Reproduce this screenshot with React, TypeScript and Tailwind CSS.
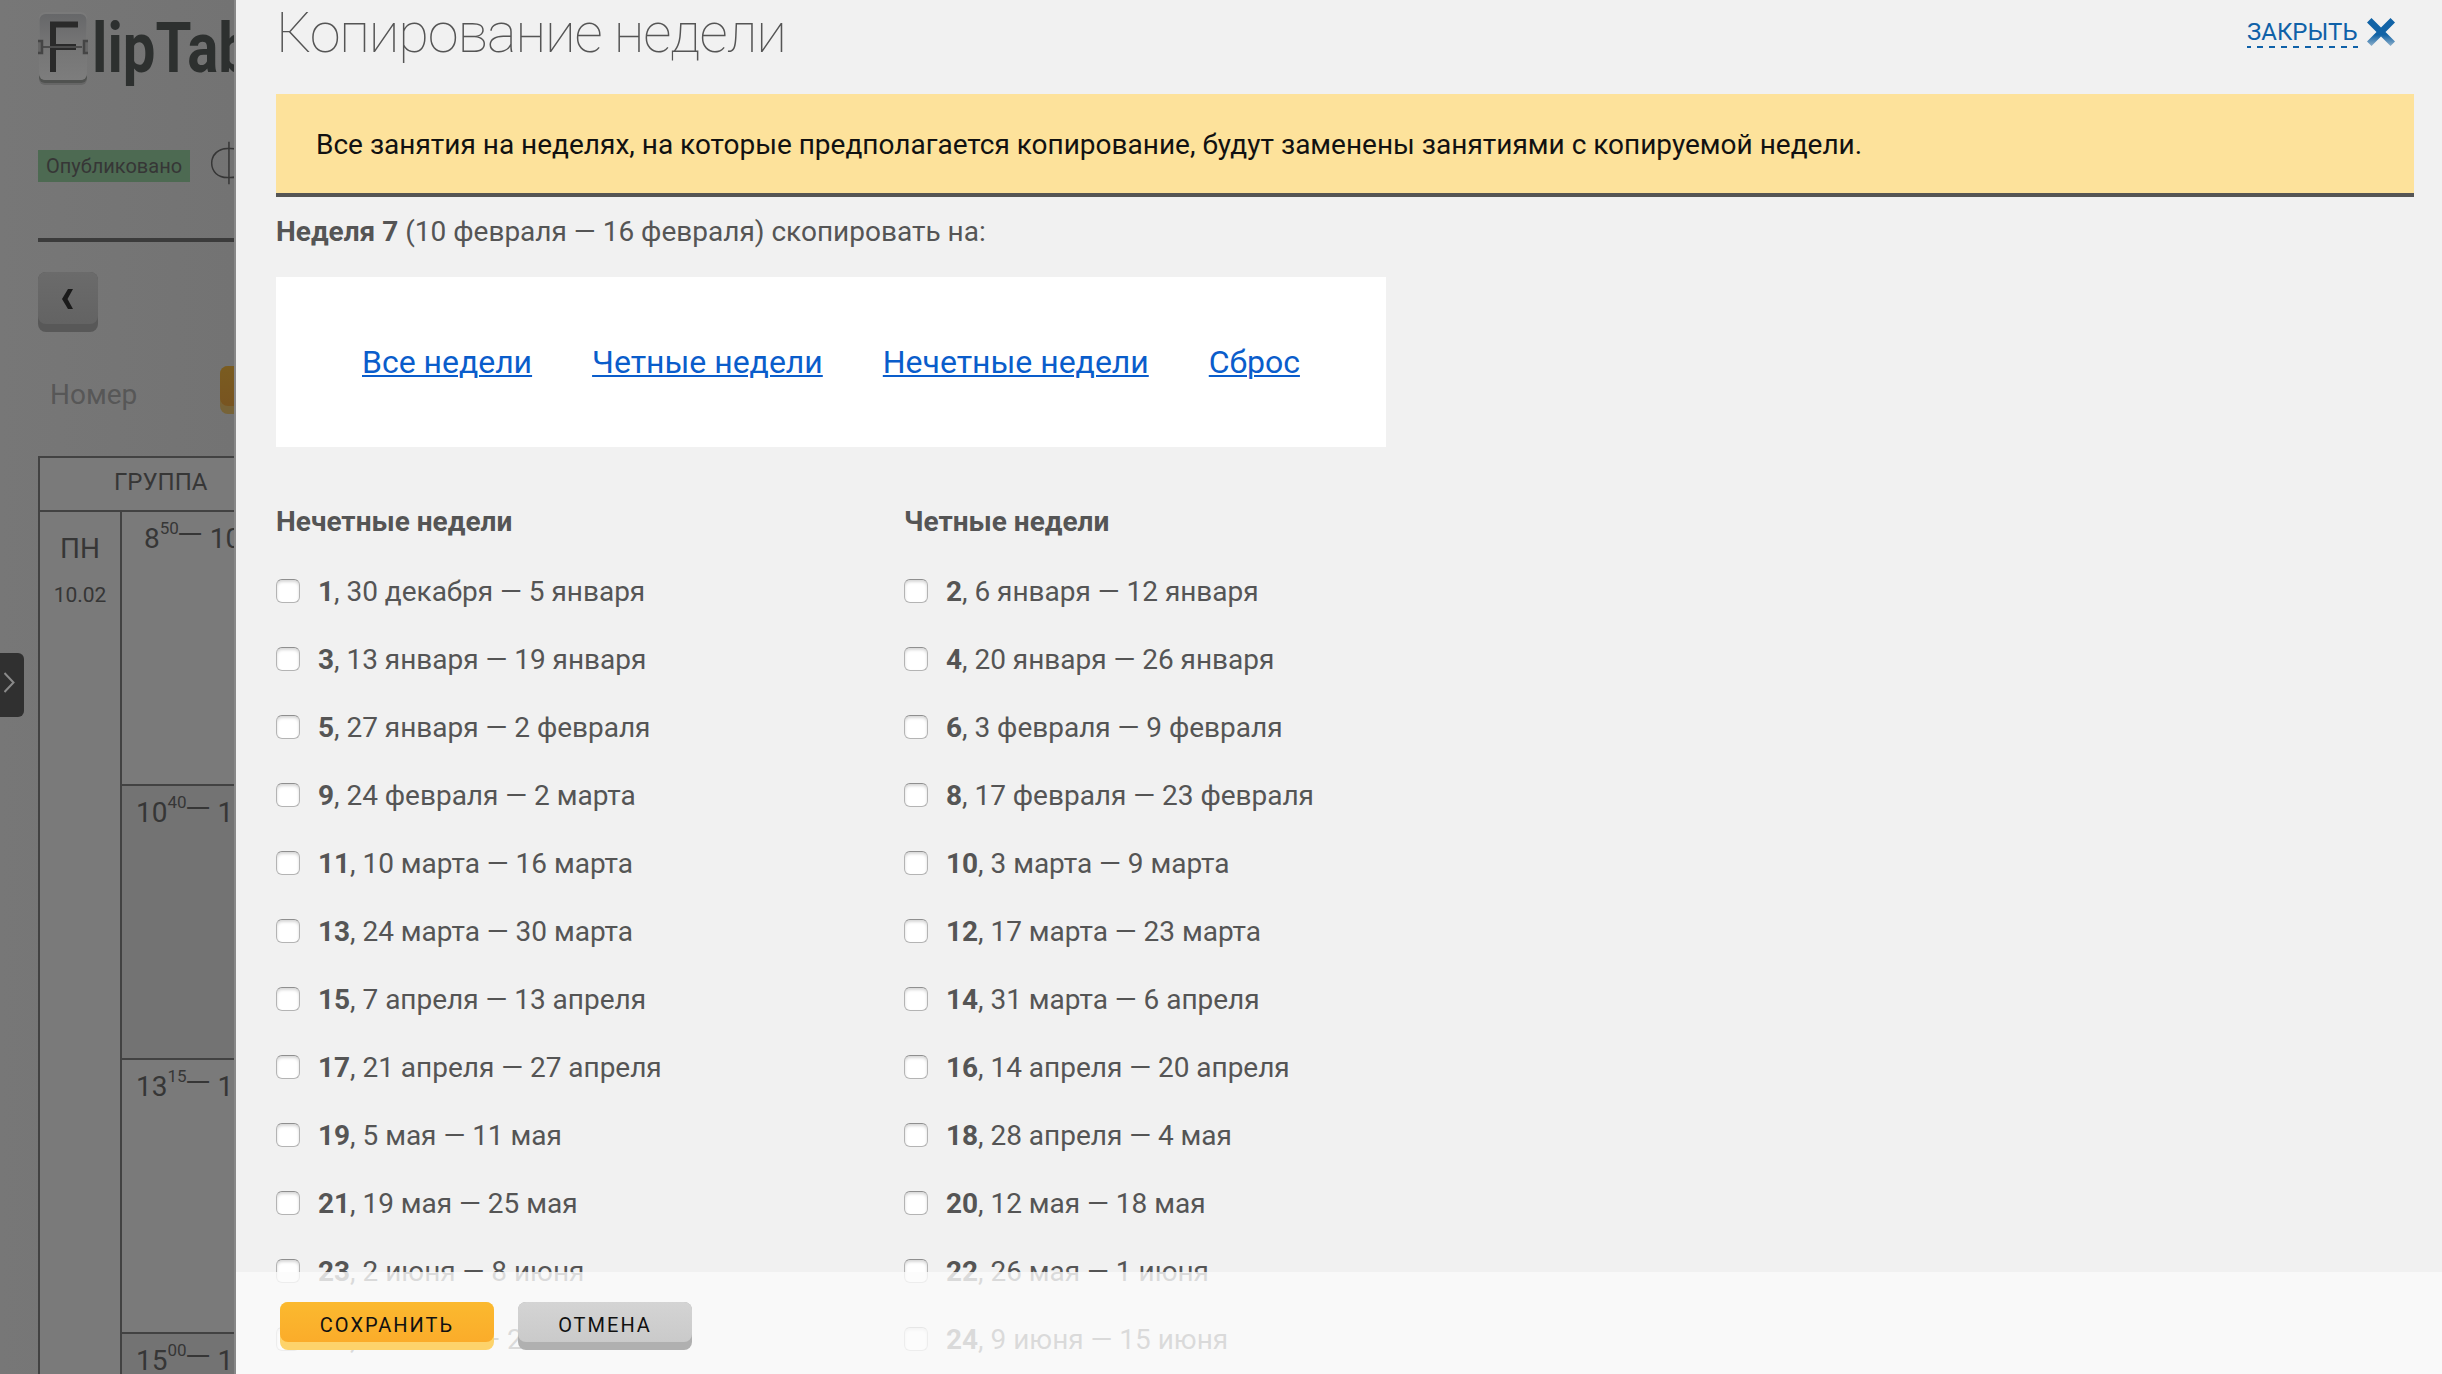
import React from 'react';

const ODD_WEEKS: [number, string][] = [
  [1, '30 декабря — 5 января'],
  [3, '13 января — 19 января'],
  [5, '27 января — 2 февраля'],
  [9, '24 февраля — 2 марта'],
  [11, '10 марта — 16 марта'],
  [13, '24 марта — 30 марта'],
  [15, '7 апреля — 13 апреля'],
  [17, '21 апреля — 27 апреля'],
  [19, '5 мая — 11 мая'],
  [21, '19 мая — 25 мая'],
  [23, '2 июня — 8 июня'],
  [25, '16 июня — 22 июня'],
];

const EVEN_WEEKS: [number, string][] = [
  [2, '6 января — 12 января'],
  [4, '20 января — 26 января'],
  [6, '3 февраля — 9 февраля'],
  [8, '17 февраля — 23 февраля'],
  [10, '3 марта — 9 марта'],
  [12, '17 марта — 23 марта'],
  [14, '31 марта — 6 апреля'],
  [16, '14 апреля — 20 апреля'],
  [18, '28 апреля — 4 мая'],
  [20, '12 мая — 18 мая'],
  [22, '26 мая — 1 июня'],
  [24, '9 июня — 15 июня'],
];

const LINKS = ['Все недели', 'Четные недели', 'Нечетные недели', 'Сброс'];

function WeekColumn({ title, weeks }: { title: string; weeks: [number, string][] }) {
  return (
    <section className="w-[628px]">
      <h2 className="mb-[2px] h-[68px] pt-px text-[28px] leading-[68px] font-bold">{title}</h2>
      {weeks.map(([n, range]) => (
        <label key={n} className="flex h-[68px] items-center text-[28px] tracking-[-0.02px] whitespace-nowrap">
          <input
            type="checkbox"
            className="mr-[18px] size-6 shrink-0 appearance-none rounded-[6px] border border-[#b4b4b4] border-t-[#8f8f8f] bg-white shadow-[inset_0_2px_3px_rgba(0,0,0,0.16)]"
          />
          <span className="pt-[2px] leading-[40px]">
            <b>{n}</b>, {range}
          </span>
        </label>
      ))}
    </section>
  );
}

function TimeCell({ hour, minutes, end, className }: { hour: string; minutes: string; end: string; className: string }) {
  return (
    <div className={`relative overflow-hidden border-b-2 border-[#424242] whitespace-nowrap ${className}`}>
      <div className="flex text-[28px] leading-[54px]">
        <span>{hour}</span>
        <span className="-mt-[11px] text-[17px]">{minutes}</span>
        <span className="-mt-1 w-[22px] origin-center scale-x-[1.2]">—</span>
        <span className="ml-[9px]">{end}</span>
      </div>
    </div>
  );
}

function Logo() {
  return (
    <div className="flex h-[96px] w-[240px]">
      <svg width="50" height="96" viewBox="0 0 50 96" className="shrink-0">
        <defs>
          <linearGradient id="tile" x1="0" y1="0" x2="0" y2="1">
            <stop offset="0" stopColor="#666769" />
            <stop offset="0.48" stopColor="#767676" />
            <stop offset="0.5" stopColor="#757575" />
            <stop offset="1" stopColor="#7d7d7d" />
          </linearGradient>
        </defs>
        <rect x="1" y="17" width="48" height="68" rx="6" fill="#666" />
        <rect x="1" y="15" width="48" height="68" rx="6" fill="#505250" />
        <rect x="1" y="12" width="48" height="68" rx="6" fill="#7a7a7a" />
        <rect x="1.5" y="14" width="47" height="66" rx="6" fill="url(#tile)" />
        <path d="M15 72V24.5H40M15 47H38" fill="none" stroke="#2a2a2a" strokeWidth="6" />
        <path d="M5 47H44" stroke="#4c4c4c" strokeWidth="2" />
        <path d="M0 41H4V53H0M50 41H46V53H50" fill="#666" stroke="#454545" strokeWidth="2.5" />
      </svg>
      <span className="ml-[4px] origin-left scale-x-[0.83] text-[70px] leading-[96px] font-bold text-[#2d302f]">lipTab</span>
    </div>
  );
}

export default function App() {
  return (
    <div className="relative flex h-[1374px] w-full overflow-hidden bg-[#f1f1f1] font-['Roboto',sans-serif] text-[#555]">
      <aside className="relative h-full w-[234px] shrink-0 overflow-hidden bg-gradient-to-r from-[#777] to-[#737373] pl-[38px] text-[#363636]">
        <Logo />
        <div className="mt-[54px] flex h-8 w-[260px] items-center">
          <span className="flex h-8 w-[152px] shrink-0 items-center justify-center bg-[#4d6a52] pb-px text-[20px]">Опубликовано</span>
          <span className="ml-[19px] text-[56px] leading-8 font-thin -translate-y-[2px]">Ф</span>
        </div>
        <div className="mt-[56px] h-1 bg-[#3b3b3b]" />
        <button className="mt-[30px] flex h-[60px] w-[60px] justify-center rounded-[8px] bg-[#585858]">
          <span className="flex h-[52px] w-full items-center justify-center rounded-[8px] bg-gradient-to-b from-[#6b6b6b] to-[#636363] pt-[2px]">
            <svg width="12" height="20" viewBox="0 0 12 20" fill="#1a1a1a">
              <path d="M6 0H11L5.5 10L11 20H6L0 10Z" />
            </svg>
          </span>
        </button>
        <div className="mt-[34px] flex h-12 w-[260px]">
          <span className="w-[182px] pl-[12px] text-[28px] leading-[58px] text-[#575757]">Номер</span>
          <span className="h-12 w-[78px] rounded-[8px] bg-[#776337]">
            <span className="block h-10 rounded-[8px] bg-gradient-to-b from-[#7a5c20] to-[#785420]" />
          </span>
        </div>
        <div className="mt-[42px] h-[918px] w-[260px] border-t-2 border-l-2 border-[#424242] bg-[#7a7a7a]">
          <div className="h-[54px] border-b-2 border-[#424242] pl-[74px] text-[24px] leading-[48px]">ГРУППА</div>
          <div className="flex h-full">
            <div className="w-[82px] border-r-2 border-[#424242] pt-[11px] text-center">
              <div className="text-[28px] leading-[52px]">ПН</div>
              <div className="text-[21px] leading-[40px]">10.02</div>
            </div>
            <div className="flex-1">
              <TimeCell hour="8" minutes="50" end="10" className="h-[274px] pl-[22px]" />
              <TimeCell hour="10" minutes="40" end="1" className="h-[274px] bg-[#737373] pl-[14px]" />
              <TimeCell hour="13" minutes="15" end="1" className="h-[274px] pl-[14px]" />
              <TimeCell hour="15" minutes="00" end="1" className="h-[274px] bg-[#737373] pl-[14px]" />
            </div>
          </div>
        </div>
        <button className="absolute top-[653px] left-0 flex h-16 w-6 items-center rounded-r-[6px] bg-[#303030]">
          <svg width="12" height="22" viewBox="0 0 12 22" className="mb-1 ml-[4px]" fill="none" stroke="#8a8a8a" strokeWidth="2">
            <path d="M0.5 1L9.5 10.5L0.5 20" />
          </svg>
        </button>
      </aside>
      <div className="w-[2px] shrink-0 bg-[#888]" />

      <main className="flex-1 pr-7 pl-10">
        <header className="flex h-[94px] justify-between">
          <h1 className="text-[56px] leading-[66px] font-thin tracking-[-1.15px]">Копирование недели</h1>
          <div className="mr-[19px] flex">
            <span className="mt-[16px] flex h-8 flex-col text-[24px] text-[#0f61a8]">
              <span className="h-[30px] leading-[33px]">ЗАКРЫТЬ</span>
              <svg width="111" height="2" className="shrink-0">
                <path d="M0 1H111" stroke="#0f61a8" strokeWidth="2" strokeDasharray="6 6" strokeDashoffset="2" />
              </svg>
            </span>
            <svg width="28" height="28" viewBox="0 0 28 28" className="mt-[18px] ml-[9px]">
              <defs>
                <linearGradient id="cross" x1="0" y1="0" x2="0" y2="1">
                  <stop offset="0.6" stopColor="#1163a6" />
                  <stop offset="1" stopColor="#8fb0ca" />
                </linearGradient>
              </defs>
              <path d="M4.5 0L14 9.5L23.5 0L28 4.5L18.5 14L28 23.5L23.5 28L14 18.5L4.5 28L0 23.5L9.5 14L0 4.5Z" fill="url(#cross)" />
            </svg>
          </div>
        </header>
        <div className="h-[103px] border-b-4 border-[#555] bg-[#fde29b] px-10 text-[28px] leading-[101px] text-[#111]">
          Все занятия на неделях, на которые предполагается копирование, будут заменены занятиями с копируемой недели.
        </div>
        <p className="h-[68px] pt-px text-[28px] leading-[68px]">
          <b>Неделя 7</b> (10 февраля — 16 февраля) скопировать на:
        </p>
        <nav className="mt-3 flex h-[170px] w-[1110px] items-center gap-[60px] bg-white pl-[86px] text-[32px] tracking-[-0.02px] text-[#0a5dcb]">
          {LINKS.map((text) => (
            <a key={text} className="whitespace-nowrap underline decoration-2 underline-offset-[2px]">
              {text}
            </a>
          ))}
        </nav>
        <div className="mt-10 flex">
          <WeekColumn title="Нечетные недели" weeks={ODD_WEEKS} />
          <WeekColumn title="Четные недели" weeks={EVEN_WEEKS} />
        </div>
      </main>

      <footer className="absolute right-0 bottom-0 left-[236px] flex h-[102px] gap-6 bg-[#fbfbfb]/80 pt-[30px] pl-[44px] text-[20px] leading-[24px] tracking-[2px] text-[#111]">
        <button className="flex h-12 w-[214px] items-start rounded-[8px] bg-[#fdd36b]">
          <span className="flex h-10 w-full items-center justify-center rounded-[8px] bg-gradient-to-b from-[#fbb92f] to-[#fbac2a] pt-[6px]">СОХРАНИТЬ</span>
        </button>
        <button className="flex h-12 w-[174px] items-start rounded-[8px] bg-[#b0b0b0]">
          <span className="flex h-10 w-full items-center justify-center rounded-[8px] bg-gradient-to-b from-[#d4d4d4] to-[#cacaca] pt-[6px]">ОТМЕНА</span>
        </button>
      </footer>
    </div>
  );
}
